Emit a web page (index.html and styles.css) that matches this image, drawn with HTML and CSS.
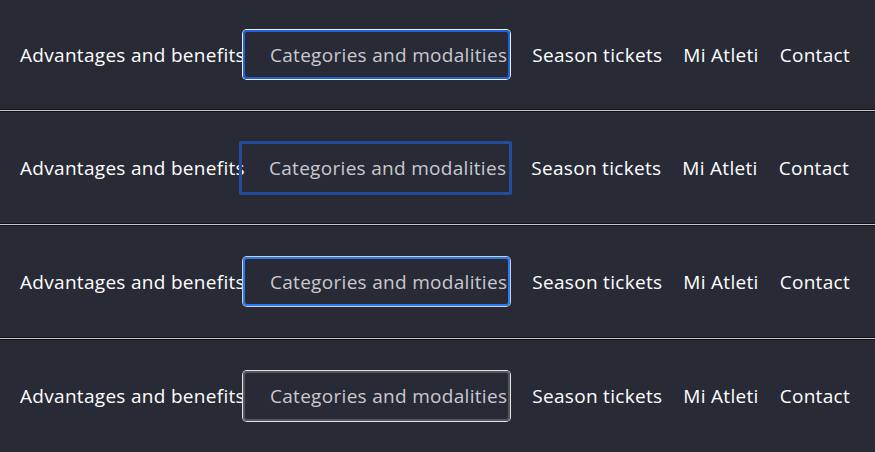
FILE: index.html
```html
<!DOCTYPE html>
<html lang="en">
<head>
  <meta charset="UTF-8" />
  <meta name="viewport" content="width=device-width, initial-scale=1.0" />
  <title>Menu focus states</title>
  <link rel="stylesheet" href="styles.css">
</head>
<body>
  <div class="states">
    <nav class="menu menu-first">
      <a class="menu-link" href="#">Advantages and benefits</a>
      <a class="menu-link menu-box box-focus" href="#">Categories and modalities</a>
      <a class="menu-link" href="#">Season tickets</a>
      <a class="menu-link" href="#">Mi Atleti</a>
      <a class="menu-link" href="#">Contact</a>
    </nav>
    <div class="divider"></div>

    <nav class="menu">
      <a class="menu-link" href="#">Advantages and benefits</a>
      <a class="menu-link menu-box box-outline" href="#">Categories and modalities</a>
      <a class="menu-link" href="#">Season tickets</a>
      <a class="menu-link" href="#">Mi Atleti</a>
      <a class="menu-link" href="#">Contact</a>
    </nav>
    <div class="divider"></div>

    <nav class="menu">
      <a class="menu-link" href="#">Advantages and benefits</a>
      <a class="menu-link menu-box box-focus box-light" href="#">Categories and modalities</a>
      <a class="menu-link" href="#">Season tickets</a>
      <a class="menu-link" href="#">Mi Atleti</a>
      <a class="menu-link" href="#">Contact</a>
    </nav>
    <div class="divider"></div>

    <nav class="menu">
      <a class="menu-link" href="#">Advantages and benefits</a>
      <a class="menu-link menu-box box-plain" href="#">Categories and modalities</a>
      <a class="menu-link" href="#">Season tickets</a>
      <a class="menu-link" href="#">Mi Atleti</a>
      <a class="menu-link" href="#">Contact</a>
    </nav>
  </div>
</body>
</html>
```

FILE: styles.css
```css
* {
  box-sizing: border-box;
  margin: 0;
  padding: 0;
}
body {
  font-family: 'Open Sans', 'Liberation Sans', sans-serif;
  background: #282a36;
  color: #fff;
  overflow: hidden;
}
.menu {
  display: flex;
  align-items: center;
  height: 111px;
  padding-left: 20px;
  background: #282a36;
}
.menu-first {
  height: 109px;
}
.menu-link {
  color: #fff;
  text-decoration: none;
  font-size: 19px;
  font-weight: 500;
  letter-spacing: 0.3px;
  white-space: nowrap;
  margin-left: 21px;
}
.menu-link:first-child {
  margin-left: 0;
}
.menu-box {
  display: flex;
  align-items: center;
  height: 49px;
  padding: 0 1px 0 25px;
  margin-left: -2px;
  margin-right: 1px;
  color: #c9c9ce;
  border-radius: 4px;
}
.box-focus {
  border: 2px solid #1d62e0;
  box-shadow: 0 0 0 1px #f2f2f2;
}
.box-light {
  border-color: #2a7cf5;
  box-shadow: 0 0 0 1px #d0d0d4;
}
.box-outline {
  height: 54px;
  padding-left: 27px;
  padding-right: 3px;
  margin-left: -6px;
  margin-right: -2px;
  border: 3px solid #234d9a;
  border-radius: 2px;
}
.box-plain {
  border: 2px solid #55575e;
  box-shadow: 0 0 0 1px #e6e6e6;
  height: 50px;
}
.divider {
  height: 3px;
  border-top: 1px solid #111217;
  border-bottom: 1px solid #111217;
  background-color: #c8c8cc;
}
```
